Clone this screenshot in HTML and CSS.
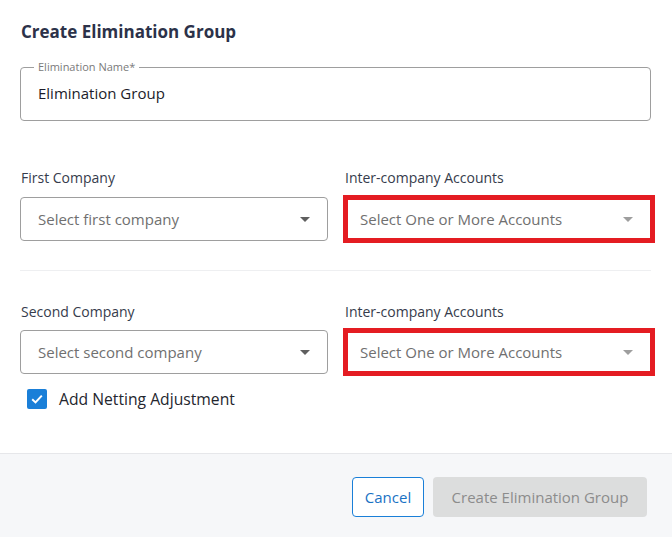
FILE: index.html
```html
<!DOCTYPE html>
<html>
<head>
<meta charset="utf-8">
<link rel="stylesheet" href="styles.css">
</head>
<body>
<div class="dialog">
  <div class="body">
    <h1 class="title">Create Elimination Group</h1>
    <div class="field">
      <span class="legend">Elimination Name*</span>
      <div class="value">Elimination Group</div>
    </div>

    <div class="row first-row">
      <div class="col">
        <div class="label">First Company</div>
        <div class="select"><span class="ph">Select first company</span><span class="caret"></span></div>
      </div>
      <div class="col">
        <div class="label">Inter-company Accounts</div>
        <div class="select flag"><span class="ph">Select One or More Accounts</span><span class="caret light"></span></div>
      </div>
    </div>

    <div class="divider"></div>

    <div class="row second-row">
      <div class="col">
        <div class="label">Second Company</div>
        <div class="select"><span class="ph">Select second company</span><span class="caret"></span></div>
        <div class="check-row">
          <span class="checkbox"><svg width="14" height="14" viewBox="0 0 14 14"><path d="M2.2 7.3 L5.5 10.4 L11.8 3.6" fill="none" stroke="#fff" stroke-width="2"/></svg></span>
          <span class="check-label">Add Netting Adjustment</span>
        </div>
      </div>
      <div class="col">
        <div class="label">Inter-company Accounts</div>
        <div class="select flag"><span class="ph">Select One or More Accounts</span><span class="caret light"></span></div>
      </div>
    </div>
  </div>
  <div class="footer">
    <button class="btn cancel">Cancel</button>
    <button class="btn primary" disabled>Create Elimination Group</button>
  </div>
</div>
</body>
</html>
```
FILE: styles.css
```css
* { box-sizing: border-box; }
body {
  margin: 0;
  background: #fff;
  font-family: "Open Sans", "Noto Sans", sans-serif;
}
.dialog {
  width: 672px;
  height: 537px;
  display: flex;
  flex-direction: column;
}
.body {
  flex: 1;
  padding: 20px 21px 0 20px;
}
.title {
  margin: 0 0 0 1px;
  font-size: 17px;
  line-height: 24px;
  font-weight: 700;
  color: #2c3249;
}
.field {
  position: relative;
  margin-top: 23px;
  height: 54px;
  border: 1px solid #9e9e9e;
  border-radius: 4px;
  padding: 0 17px;
  display: flex;
  align-items: center;
}
.legend {
  position: absolute;
  top: -8px;
  left: 13px;
  padding: 0 4px;
  background: #fff;
  font-size: 11px;
  line-height: 14px;
  color: #7a7a7a;
}
.value {
  font-size: 15px;
  line-height: 20px;
  color: #1c1c2a;
  margin-top: -2px;
}
.row {
  display: grid;
  grid-template-columns: 308px 309px;
  column-gap: 16px;
}
.first-row { margin-top: 47px; }
.label {
  font-size: 14px;
  line-height: 20px;
  color: #363c4c;
  margin: 0 0 9px 1px;
}
.second-row .label { margin-bottom: 8px; }
.select {
  height: 44px;
  border: 1px solid #9e9e9e;
  border-radius: 4px;
  padding: 0 17px 0 17px;
  display: flex;
  align-items: center;
  justify-content: space-between;
}
.select.flag {
  border: 5px solid #e41c22;
  border-radius: 0;
  height: 48px;
  margin: -2px -2px -2px -1px;
  padding: 0 17px 0 12px;
}
.ph {
  font-size: 15px;
  color: #707070;
}
.caret {
  width: 0;
  height: 0;
  border-left: 5.5px solid transparent;
  border-right: 5.5px solid transparent;
  border-top: 5px solid #5f5f5f;
}
.caret.light { border-top-color: #9e9e9e; }
.divider {
  height: 1px;
  background: #eeeff1;
  margin: 29px 0 31px;
  width: 631px;
}
.check-row {
  display: flex;
  align-items: center;
  margin-top: 15px;
  padding-left: 7px;
}
.checkbox {
  width: 20px;
  height: 20px;
  border-radius: 2px;
  background: #1a7fd8;
  display: flex;
  align-items: center;
  justify-content: center;
}
.check-label {
  margin-left: 12px;
  font-size: 15.7px;
  line-height: 20px;
  color: #24262e;
}
.footer {
  height: 84px;
  border-top: 1px solid #e6e7ea;
  background: #f6f7f9;
  display: flex;
  justify-content: flex-end;
  align-items: flex-start;
  padding: 23px 25px 0 0;
  gap: 9px;
}
.btn {
  height: 40px;
  border-radius: 4px;
  font-family: inherit;
  font-size: 15px;
  padding: 0;
}
.cancel {
  width: 72px;
  background: #fff;
  border: 1px solid #1a7fd8;
  color: #1a72c4;
}
.primary {
  width: 214px;
  background: #dcdddd;
  border: none;
  color: #8c8c8c;
}
```
